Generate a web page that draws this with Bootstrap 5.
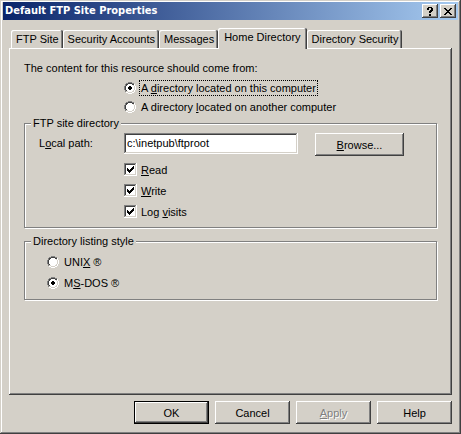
<!DOCTYPE html>
<html lang="en">
<head>
<meta charset="utf-8">
<meta name="viewport" content="width=device-width, initial-scale=1">
<title>Default FTP Site Properties</title>
<link href="https://cdn.jsdelivr.net/npm/bootstrap@5.3.0/dist/css/bootstrap.min.css" rel="stylesheet">
<style>
:root { --face: #d4d0c8; --shade: #808080; --dark: #404040; }
body { font: 11px/14px Tahoma, "Liberation Sans", Arial, sans-serif; color: #000; background: var(--face); }
u { text-underline-offset: 1px; text-decoration-thickness: 1px; text-decoration-skip-ink: none; }

.dialog { background: var(--face); padding: 2px 3px 10px 3px; box-shadow: inset -1px -1px var(--dark), inset 1px 1px var(--face), inset -2px -2px var(--shade), inset 2px 2px #fff; }
.caption { height: 18px; gap: 2px; padding: 0 2px; background: linear-gradient(90deg, #0a246a, #a6caf0); color: #fff; }
.caption h1 { font: bold 11px/18px Tahoma, "DejaVu Sans Condensed", "DejaVu Sans", sans-serif; }
.caption-btn { width: 16px; height: 14px; }
.caption-btn svg { display: block; margin: auto; }

.raised, .raised:hover, .raised:disabled { font-size: 11px; line-height: 14px; color: #000; background: var(--face); border: 0; border-radius: 0; opacity: 1;
  box-shadow: inset -1px -1px var(--dark), inset 1px 1px #fff, inset -2px -2px var(--shade); }
.push { height: 23px; width: 75px; padding: 0; }
.push-wide { width: 89px; }
.raised.push-default { box-shadow: inset 0 0 0 1px #000, inset -2px -2px var(--dark), inset 2px 2px #fff, inset -3px -3px var(--shade); }
.raised.push:disabled { color: var(--shade); text-shadow: 1px 1px #fff; }

.main-area { padding: 8px 6px 0 6px; }
.tab-strip { padding-left: 2px; height: 20px; border: 0; }
.tab-strip .tab { height: 18px; padding: 0 4px 0 5px; font-size: 11px; line-height: 18px; color: #000; background: var(--face); border: 0; border-radius: 2px 2px 0 0;
  box-shadow: inset -1px 0 var(--dark), inset 1px 1px #fff, inset -2px 0 var(--shade); white-space: nowrap; }
.tab-strip .tab.active { height: 21px; padding: 0 6px 3px 6px; margin-bottom: -1px; position: relative; box-shadow: inset -1px 0 var(--dark), inset 1px 1px #fff, inset -2px 0 var(--shade); }
.sheet { background: var(--face); padding: 13px 15px 16px 15px; box-shadow: inset -1px -1px var(--dark), inset 1px 1px #fff, inset -2px -2px var(--shade); }

.intro { margin-bottom: 4px; }
.source { padding-left: 100px; gap: 1px; }
.choice { gap: 3px; height: 18px; }
.choice label { padding: 1px; border: 1px dotted transparent; line-height: 12px; }
.choice label.focused { border-color: #000; }
.radio { appearance: none; width: 12px; height: 12px; margin: 0; flex: none;
  background: url("data:image/svg+xml,%3Csvg xmlns='http://www.w3.org/2000/svg' viewBox='0 0 12 12' shape-rendering='crispEdges'%3E%3Cpath fill='%23fff' d='M4 2h4v1h1v1h1v4h-1v1h-1v1h-4v-1h-1v-1h-1v-4h1v-1h1zM10 2h1v2h-1zM11 4h1v4h-1zM10 8h1v2h-1zM2 10h2v1h-2zM8 10h2v1h-2zM4 11h4v1h-4z'/%3E%3Cpath fill='%23808080' d='M4 0h4v1h-4zM2 1h2v1h-2zM8 1h2v1h-2zM1 2h1v2h-1zM0 4h1v4h-1zM1 8h1v2h-1z'/%3E%3Cpath fill='%23404040' d='M4 1h4v1h-4zM2 2h2v1h-2zM8 2h2v1h-2zM2 3h1v1h-1zM1 4h1v4h-1zM2 8h1v1h-1z'/%3E%3C/svg%3E"); }
.radio:checked { background-image: url("data:image/svg+xml,%3Csvg xmlns='http://www.w3.org/2000/svg' viewBox='0 0 12 12' shape-rendering='crispEdges'%3E%3Cpath fill='%23fff' d='M4 2h4v1h1v1h1v4h-1v1h-1v1h-4v-1h-1v-1h-1v-4h1v-1h1zM10 2h1v2h-1zM11 4h1v4h-1zM10 8h1v2h-1zM2 10h2v1h-2zM8 10h2v1h-2zM4 11h4v1h-4z'/%3E%3Cpath fill='%23808080' d='M4 0h4v1h-4zM2 1h2v1h-2zM8 1h2v1h-2zM1 2h1v2h-1zM0 4h1v4h-1zM1 8h1v2h-1z'/%3E%3Cpath fill='%23404040' d='M4 1h4v1h-4zM2 2h2v1h-2zM8 2h2v1h-2zM2 3h1v1h-1zM1 4h1v4h-1zM2 8h1v1h-1z'/%3E%3Cpath d='M5 4h2v1h1v2h-1v1h-2v-1h-1v-2h1z'/%3E%3C/svg%3E"); }

.group { border: 1px solid var(--shade); box-shadow: 1px 1px #fff, inset 1px 1px #fff; padding: 0 14px; }
.group legend { font-size: 11px; line-height: 14px; padding: 0 2px; margin: 0 0 0 -8px; background: var(--face); }
.group-next { margin-top: 6px; }
.path-row { padding-top: 3px; }
.path-label { width: 85px; line-height: 20px; }
.sunken { background-color: #fff; box-shadow: inset -1px -1px #fff, inset 1px 1px var(--shade), inset -2px -2px var(--face), inset 2px 2px var(--dark); }
.path-box { width: 174px; height: 21px; min-width: 0; padding: 0 3px 1px; border: 0; color: #000; }
.browse-gap { margin-left: 17px; }
.checks { padding: 3px 0 5px 85px; }
.check { gap: 4px; height: 21px; }
.tick { appearance: none; width: 13px; height: 13px; margin: 0; flex: none; }
.tick:checked { background-image: url("data:image/svg+xml,%3Csvg xmlns='http://www.w3.org/2000/svg' viewBox='0 0 13 13' shape-rendering='crispEdges'%3E%3Cpath d='M3 5h1v1h1v1h1v-1h1v-1h1v-1h1v-1h1v3h-1v1h-1v1h-1v1h-1v1h-1v-1h-1v-1h-1z'/%3E%3C/svg%3E"); }
.listing { padding: 5px 0 7px 8px; gap: 3px; }
.actions { gap: 6px; padding-top: 6px; }
</style>
</head>
<body>
<form class="dialog min-vh-100 d-flex flex-column">
  <header class="caption d-flex align-items-center">
    <h1 class="m-0 me-auto">Default FTP Site Properties</h1>
    <button type="button" class="raised caption-btn p-0" aria-label="What's this?">
      <svg width="6" height="9" viewBox="0 0 6 9" shape-rendering="crispEdges"><path d="M1 0h4v1h1v3h-1v1h-1v1h-2v-2h1v-1h1v-2h-2v2h-2v-2h1zM2 7h2v2h-2z"/></svg>
    </button>
    <button type="button" class="raised caption-btn p-0" aria-label="Close">
      <svg width="8" height="7" viewBox="0 0 8 7" shape-rendering="crispEdges"><path d="M0 0h2v1h1v1h2v-1h1v-1h2v1h-1v1h-1v1h-1v1h1v1h1v1h1v1h-2v-1h-1v-1h-2v1h-1v1h-2v-1h1v-1h1v-1h1v-1h-1v-1h-1v-1h-1z"/></svg>
    </button>
  </header>

  <main class="main-area flex-grow-1 d-flex flex-column">
    <div class="tab-strip nav nav-tabs flex-nowrap align-items-end" role="tablist">
      <button type="button" class="tab" role="tab">FTP Site</button>
      <button type="button" class="tab" role="tab">Security Accounts</button>
      <button type="button" class="tab" role="tab">Messages</button>
      <button type="button" class="tab active" role="tab" aria-selected="true">Home Directory</button>
      <button type="button" class="tab" role="tab">Directory Security</button>
    </div>

    <section class="sheet flex-grow-1" role="tabpanel">
      <p class="intro">The content for this resource should come from:</p>
      <div class="source d-flex flex-column">
        <div class="choice d-flex align-items-center">
          <input class="radio" type="radio" name="source" id="src-this" checked>
          <label class="focused" for="src-this">A <u>d</u>irectory located on this computer</label>
        </div>
        <div class="choice d-flex align-items-center">
          <input class="radio" type="radio" name="source" id="src-other">
          <label for="src-other">A directory <u>l</u>ocated on another computer</label>
        </div>
      </div>

      <fieldset class="group">
        <legend class="float-none w-auto">FTP site directory</legend>
        <div class="path-row d-flex align-items-start">
          <label class="path-label flex-shrink-0" for="path">L<u>o</u>cal path:</label>
          <input class="sunken path-box" type="text" id="path" value="c:\inetpub\ftproot">
          <button type="button" class="raised push push-wide browse-gap"><u>B</u>rowse...</button>
        </div>
        <div class="checks">
          <div class="check d-flex align-items-center"><input class="tick sunken" type="checkbox" id="read" checked><label for="read"><u>R</u>ead</label></div>
          <div class="check d-flex align-items-center"><input class="tick sunken" type="checkbox" id="write" checked><label for="write"><u>W</u>rite</label></div>
          <div class="check d-flex align-items-center"><input class="tick sunken" type="checkbox" id="log" checked><label for="log">Log <u>v</u>isits</label></div>
        </div>
      </fieldset>

      <fieldset class="group group-next">
        <legend class="float-none w-auto">Directory listing style</legend>
        <div class="listing d-flex flex-column">
          <div class="choice d-flex align-items-center"><input class="radio" type="radio" name="style" id="unix"><label for="unix">UNI<u>X</u> ®</label></div>
          <div class="choice d-flex align-items-center"><input class="radio" type="radio" name="style" id="msdos" checked><label for="msdos">M<u>S</u>-DOS ®</label></div>
        </div>
      </fieldset>
    </section>

    <footer class="actions d-flex justify-content-end">
      <button type="submit" class="raised push push-default">OK</button>
      <button type="button" class="raised push">Cancel</button>
      <button type="button" class="raised push" disabled><u>A</u>pply</button>
      <button type="button" class="raised push">Help</button>
    </footer>
  </main>
</form>
<script src="https://cdn.jsdelivr.net/npm/bootstrap@5.3.0/dist/js/bootstrap.bundle.min.js"></script>
</body>
</html>
